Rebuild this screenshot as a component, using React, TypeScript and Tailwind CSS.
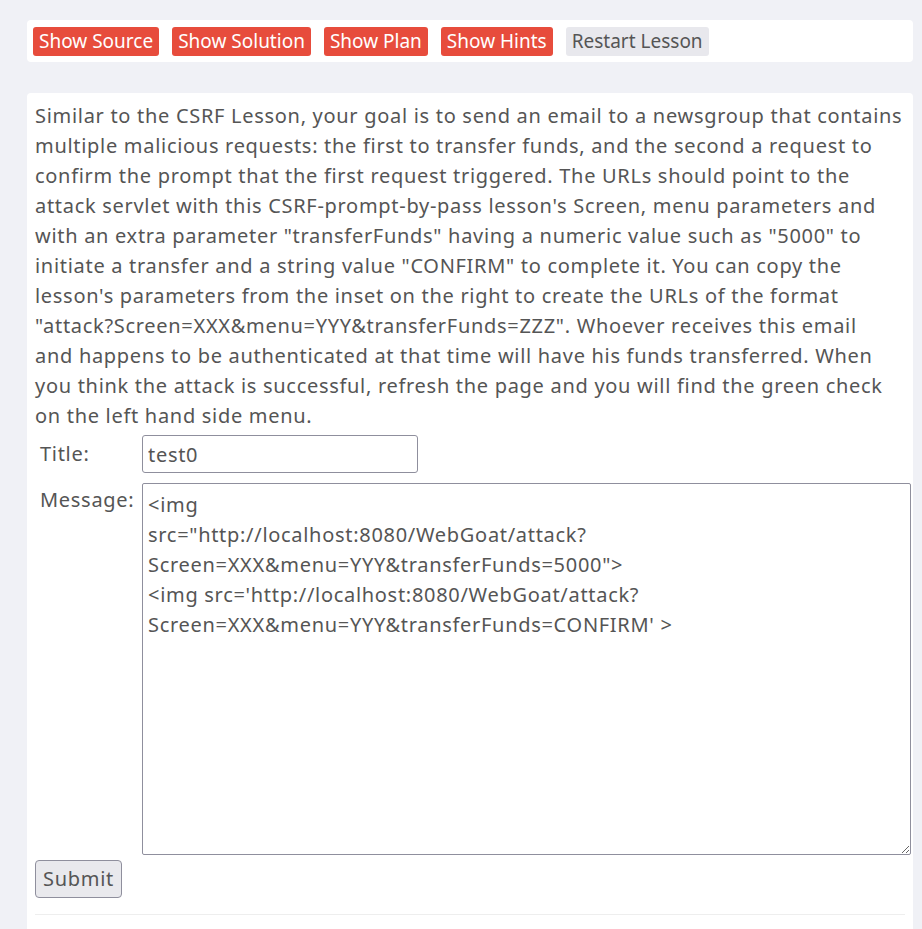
import { useState } from 'react';

const buttons = ['Show Source', 'Show Solution', 'Show Plan', 'Show Hints'];

const message =
  '<img\nsrc="http://localhost:8080/WebGoat/attack?Screen=XXX&menu=YYY&transferFunds=5000">\n' +
  "<img src='http://localhost:8080/WebGoat/attack?Screen=XXX&menu=YYY&transferFunds=CONFIRM' >";

export default function App() {
  const [title, setTitle] = useState('test0');
  const [body, setBody] = useState(message);

  return (
    <div className="min-h-[929px] overflow-hidden bg-[#f0f1f6] pl-[27px] pr-[9px] pt-5 text-[#555] font-['Noto_Sans',sans-serif]">
      <div className="flex h-[42px] items-center gap-[13px] rounded-[4px] bg-white px-[6px]">
        {buttons.map((b) => (
          <button
            key={b}
            className="h-[29px] rounded-[3px] bg-[#e74c3c] px-[6px] text-[19px] leading-[29px] text-white"
          >
            {b}
          </button>
        ))}
        <button className="h-[29px] rounded-[3px] bg-[#e8e8ed] px-[6px] text-[19px] leading-[29px] text-[#555]">
          Restart Lesson
        </button>
      </div>

      <div className="mt-[31px] rounded-t-[4px] bg-white pl-2 pr-[2px] pt-2 pb-10 tracking-[0.7px]">
        <p className="pr-[6px] text-[20px] leading-[30px]">
          Similar to the CSRF Lesson, your goal is to send an email to a newsgroup that contains
          multiple malicious requests: the first to transfer funds, and the second a request to
          confirm the prompt that the first request triggered. The URLs should point to the attack
          servlet with this CSRF-prompt-by-pass lesson's Screen, menu parameters and with an extra
          parameter "transferFunds" having a numeric value such as "5000" to initiate a transfer and
          a string value "CONFIRM" to complete it. You can copy the lesson's parameters from the
          inset on the right to create the URLs of the format
          "attack?Screen=XXX&amp;menu=YYY&amp;transferFunds=ZZZ". Whoever receives this email
          <br />
          and happens to be authenticated at that time will have his funds transferred. When
          <br />
          you think the attack is successful, refresh the page and you will find the green check
          <br />
          on the left hand side menu.
        </p>

        <div className="mt-1 grid grid-cols-[107px_1fr] gap-y-[10px] text-[20px]">
          <label className="flex items-center pl-[5px]">Title:</label>
          <input
            value={title}
            onChange={(e) => setTitle(e.target.value)}
            className="h-[38px] w-[276px] rounded-[3px] border border-[#8f8f9d] px-[5px] text-[20px] tracking-[0.7px] text-[#555] outline-none"
          />
          <label className="pl-[5px] pt-[2px] leading-[30px]">Message:</label>
          <textarea
            value={body}
            onChange={(e) => setBody(e.target.value)}
            className="h-[372px] w-full rounded-[2px] border border-[#8f8f9d] px-[5px] pt-[6px] text-[20px] leading-[30px] tracking-[0.7px] text-[#555] outline-none"
          />
        </div>

        <button className="mt-[5px] h-[38px] rounded-[4px] border border-[#8f8f9d] bg-[#e9e9ed] px-[7px] text-[20px] tracking-[0.7px] text-[#555]">
          Submit
        </button>

        <hr className="mr-[6px] mt-[16px] border-[#eee]" />
      </div>
    </div>
  );
}
